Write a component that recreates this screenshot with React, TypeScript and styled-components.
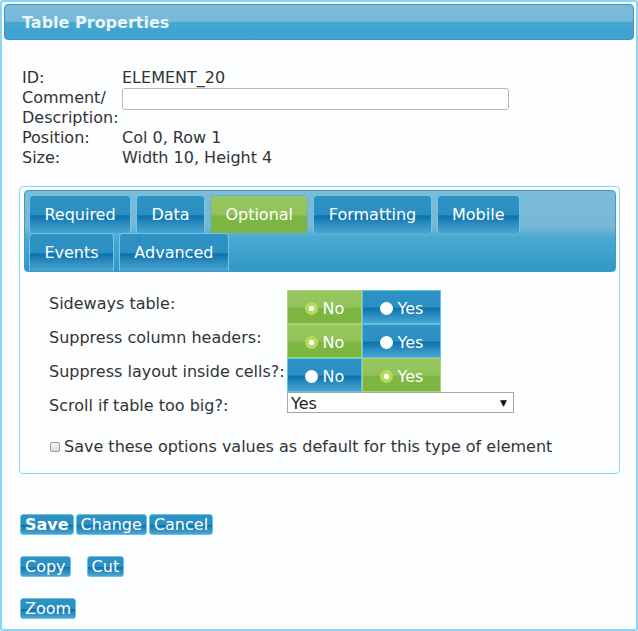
import React, { useState } from 'react';
import styled, { createGlobalStyle, css } from 'styled-components';

const GlobalStyle = createGlobalStyle`
  html, body {
    margin: 0;
    padding: 0;
    background: #ffffff;
  }
  * {
    box-sizing: border-box;
  }
`;

// glossy blue used by tabs, radio cells and buttons
const blueGloss = css`
  background: linear-gradient(
    to bottom,
    #2e92c3 0%,
    #2a8fc1 50%,
    #0b72ac 54%,
    #2b8cc0 75%,
    #49a5cf 100%
  );
`;

const greenGloss = css`
  background: linear-gradient(
    to bottom,
    #98c662 0%,
    #93c25c 50%,
    #7db642 54%,
    #7cb543 100%
  );
`;

const Dialog = styled.div`
  width: 638px;
  height: 631px;
  border: 2px solid #86d7f7;
  border-radius: 3px;
  background: #fcfeff;
  padding: 2px 2px 0 2px;
  font-family: 'DejaVu Sans', Verdana, sans-serif;
  font-size: 16px;
  color: #333;
`;

const Header = styled.div`
  height: 36px;
  border: 1px solid #3a93c8;
  border-radius: 4px;
  background: linear-gradient(to bottom, #7bbcd9 0%, #76b9d7 48%, #45a7d1 52%, #3ea2cf 100%);
  display: flex;
  align-items: center;
  padding-left: 17px;
`;

const Title = styled.div`
  font-weight: bold;
  font-size: 16px;
  color: #e9f5fa;
`;

const Info = styled.div`
  display: grid;
  grid-template-columns: 100px 387px;
  line-height: 20px;
  margin: 28px 0 0 18px;
`;

const Label = styled.div``;

const Value = styled.div``;

const TextInput = styled.input`
  width: 387px;
  height: 22px;
  border: 1px solid #b8b8b8;
  border-radius: 3px;
  background: #fff;
  grid-row: span 2;
  align-self: start;
`;

const OptionsBox = styled.div`
  margin: 18px 0 0 15px;
  width: 601px;
  height: 288px;
  border: 1px solid #8ad6f5;
  border-radius: 4px;
  padding: 3px 3px 0 4px;
`;

const TabPanel = styled.div`
  border: 1px solid #4596c9;
  border-radius: 4px;
  height: 82px;
  padding: 4px 4px 0 4px;
  background: linear-gradient(to bottom, #7cbcd9 0%, #76b8d6 45%, #4aaad2 58%, #2f98c7 100%);
  display: flex;
  flex-direction: column;
`;

const TabRow = styled.div`
  display: flex;
  gap: 5px;
`;

const Tab = styled.div<{ $active?: boolean }>`
  height: 38px;
  padding: 0 14.4px;
  border: 1px solid ${(p) => (p.$active ? '#6aaee0' : '#6ec6ec')};
  border-bottom: none;
  border-radius: 4px 4px 0 0;
  display: flex;
  align-items: center;
  color: #fff;
  font-size: 16px;
  ${(p) => (p.$active ? greenGloss : blueGloss)}
`;

const OptionGrid = styled.div`
  display: grid;
  grid-template-columns: 238px auto;
  grid-auto-rows: 34px;
  margin: 18px 0 0 25px;
`;

const OptionLabel = styled.div`
  padding-top: 4px;
`;

const RadioGroup = styled.div`
  display: flex;
`;

const RadioCell = styled.div<{ $on: boolean; $w: number }>`
  width: ${(p) => p.$w}px;
  height: 34px;
  border: 1px solid ${(p) => (p.$on ? '#a6d56a' : '#5cc2ee')};
  display: flex;
  align-items: center;
  justify-content: center;
  gap: 5px;
  padding-top: 2px;
  color: #fff;
  font-size: 16px;
  ${(p) => (p.$on ? greenGloss : blueGloss)}
`;

const RadioDot = styled.span<{ $on: boolean }>`
  width: 13px;
  height: 13px;
  border-radius: 50%;
  background: #fff;
  ${(p) =>
    p.$on &&
    css`
      background: radial-gradient(circle, #ffffff 0 2.5px, #b4dc58 3px);
    `}
`;

const Select = styled.div`
  width: 227px;
  height: 21px;
  border: 1px solid #a6a6a6;
  background: #fff;
  display: flex;
  align-items: center;
  justify-content: space-between;
  padding: 1px 6px 0 3px;
  color: #222;
  font-size: 16px;
`;

const Arrow = styled.span`
  font-size: 9px;
  color: #111;
`;

const CheckLine = styled.label`
  display: flex;
  align-items: center;
  gap: 4px;
  margin: 11px 0 0 26px;
  line-height: 20px;
`;

const Check = styled.span`
  width: 10px;
  height: 10px;
  border: 1px solid #9a9a9a;
  border-radius: 2px;
  background: linear-gradient(#f4f4f4, #dcdcdc);
`;

const Actions = styled.div`
  display: flex;
  flex-direction: column;
  gap: 21px;
  margin: 40px 0 0 16px;
`;

const ButtonRow = styled.div<{ $gap: number }>`
  display: flex;
  gap: ${(p) => p.$gap}px;
`;

const Button = styled.button<{ $bold?: boolean }>`
  height: 21px;
  padding: 0 4px;
  border: 1px solid #6ac4ea;
  border-radius: 3px;
  color: #fff;
  font-family: 'DejaVu Sans', Verdana, sans-serif;
  font-size: 16px;
  font-weight: ${(p) => (p.$bold ? 'bold' : 'normal')};
  line-height: 19px;
  ${blueGloss}
`;

const options = [
  { label: 'Sideways table:', yes: false },
  { label: 'Suppress column headers:', yes: false },
  { label: 'Suppress layout inside cells?:', yes: true },
];

export default function App() {
  const [values, setValues] = useState(options.map((o) => o.yes));

  const setValue = (i: number, v: boolean) => {
    const next = [...values];
    next[i] = v;
    setValues(next);
  };

  return (
    <>
      <GlobalStyle />
      <Dialog>
        <Header>
          <Title>Table Properties</Title>
        </Header>

        <Info>
          <Label>ID:</Label>
          <Value>ELEMENT_20</Value>
          <Label>Comment/</Label>
          <TextInput />
          <Label>Description:</Label>
          <Label>Position:</Label>
          <Value>Col 0, Row 1</Value>
          <Label>Size:</Label>
          <Value>Width 10, Height 4</Value>
        </Info>

        <OptionsBox>
          <TabPanel>
            <TabRow>
              <Tab>Required</Tab>
              <Tab>Data</Tab>
              <Tab $active>Optional</Tab>
              <Tab>Formatting</Tab>
              <Tab>Mobile</Tab>
            </TabRow>
            <TabRow>
              <Tab>Events</Tab>
              <Tab>Advanced</Tab>
            </TabRow>
          </TabPanel>

          <OptionGrid>
            {options.map((o, i) => (
              <React.Fragment key={o.label}>
                <OptionLabel>{o.label}</OptionLabel>
                <RadioGroup>
                  <RadioCell $on={!values[i]} $w={75} onClick={() => setValue(i, false)}>
                    <RadioDot $on={!values[i]} />
                    No
                  </RadioCell>
                  <RadioCell $on={values[i]} $w={79} onClick={() => setValue(i, true)}>
                    <RadioDot $on={values[i]} />
                    Yes
                  </RadioCell>
                </RadioGroup>
              </React.Fragment>
            ))}
            <OptionLabel>Scroll if table too big?:</OptionLabel>
            <Select>
              Yes
              <Arrow>▼</Arrow>
            </Select>
          </OptionGrid>

          <CheckLine>
            <Check />
            Save these options values as default for this type of element
          </CheckLine>
        </OptionsBox>

        <Actions>
          <ButtonRow $gap={2}>
            <Button $bold>Save</Button>
            <Button>Change</Button>
            <Button>Cancel</Button>
          </ButtonRow>
          <ButtonRow $gap={16}>
            <Button>Copy</Button>
            <Button>Cut</Button>
          </ButtonRow>
          <ButtonRow $gap={2}>
            <Button>Zoom</Button>
          </ButtonRow>
        </Actions>
      </Dialog>
    </>
  );
}
